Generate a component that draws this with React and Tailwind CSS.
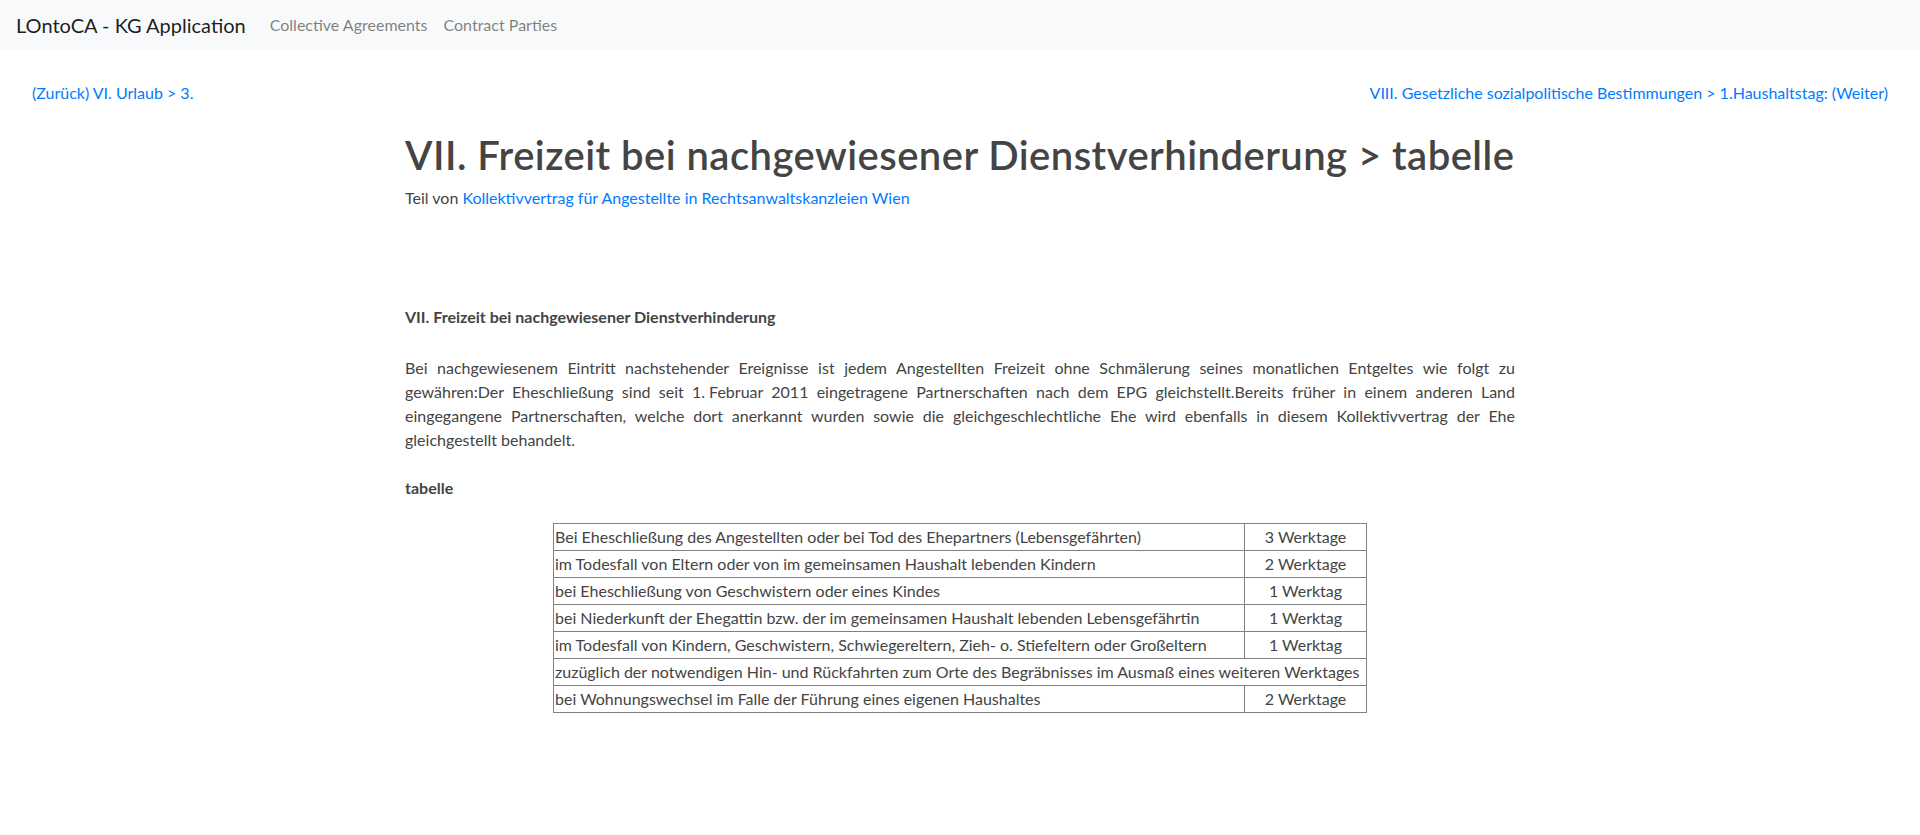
import React from "react";

const rows = [
  ["Bei Eheschließung des Angestellten oder bei Tod des Ehepartners (Lebensgefährten)", "3 Werktage"],
  ["im Todesfall von Eltern oder von im gemeinsamen Haushalt lebenden Kindern", "2 Werktage"],
  ["bei Eheschließung von Geschwistern oder eines Kindes", "1 Werktag"],
  ["bei Niederkunft der Ehegattin bzw. der im gemeinsamen Haushalt lebenden Lebensgefährtin", "1 Werktag"],
  ["im Todesfall von Kindern, Geschwistern, Schwiegereltern, Zieh- o. Stiefeltern oder Großeltern", "1 Werktag"],
  ["zuzüglich der notwendigen Hin- und Rückfahrten zum Orte des Begräbnisses im Ausmaß eines weiteren Werktages", null],
  ["bei Wohnungswechsel im Falle der Führung eines eigenen Haushaltes", "2 Werktage"],
];

const Navbar = () => (
  <nav className="flex h-[50px] items-center bg-[#f8f9fa] px-4">
    <a href="#" className="mr-4 text-[20px] leading-[30px] text-black/90">
      LOntoCA - KG Application
    </a>
    <a href="#" className="px-2 text-base leading-6 text-black/50">
      Collective Agreements
    </a>
    <a href="#" className="px-2 text-base leading-6 text-black/50">
      Contract Parties
    </a>
  </nav>
);

export default function App() {
  return (
    <div className="min-h-screen bg-white font-['Lato','Liberation_Sans',sans-serif] text-base leading-6 text-[#444]">
      <Navbar />

      <div className="flex justify-between px-8 pt-[31px]">
        <a href="#" className="text-[#007bff]">
          (Zurück) VI. Urlaub &gt; 3.
        </a>
        <a href="#" className="text-[#007bff]">
          VIII. Gesetzliche sozialpolitische Bestimmungen &gt; 1.Haushaltstag: (Weiter)
        </a>
      </div>

      <div className="mx-auto w-[1140px] px-[15px] pt-[26px]">
        <h1 className="mb-[7px] whitespace-nowrap text-[40px] font-semibold leading-[48px] tracking-[0.45px] text-[#444]">
          VII. Freizeit bei nachgewiesener Dienstverhinderung &gt; tabelle
        </h1>
        <p>
          Teil von{" "}
          <a href="#" className="text-[#007bff]">
            Kollektivvertrag für Angestellte in Rechtsanwaltskanzleien Wien
          </a>
        </p>

        <div className="pt-[95px]">
          <p className="font-bold">VII. Freizeit bei nachgewiesener Dienstverhinderung</p>
          <p className="mt-[27px] text-justify">
            Bei nachgewiesenem Eintritt nachstehender Ereignisse ist jedem Angestellten Freizeit
            ohne Schmälerung seines monatlichen Entgeltes wie folgt zu gewähren:Der Eheschließung
            sind seit 1.&#8239;Februar 2011 eingetragene Partnerschaften nach dem EPG
            gleichstellt.Bereits früher in einem anderen Land eingegangene Partnerschaften, welche
            dort anerkannt wurden sowie die gleichgeschlechtliche Ehe wird ebenfalls in diesem
            Kollektivvertrag der Ehe gleichgestellt behandelt.
          </p>
          <p className="mt-6 font-bold">tabelle</p>

          <table className="mx-auto mt-[23px] w-[814px] border-collapse">
            <tbody>
              {rows.map(([label, value], i) => (
                <tr key={i}>
                  {value ? (
                    <>
                      <td className="border border-[#808080] px-px py-px leading-6 whitespace-nowrap">
                        {label}
                      </td>
                      <td className="w-[122px] border border-[#808080] px-px py-px text-center leading-6">
                        {value}
                      </td>
                    </>
                  ) : (
                    <td colSpan={2} className="border border-[#808080] px-px py-px leading-6 whitespace-nowrap">
                      {label}
                    </td>
                  )}
                </tr>
              ))}
            </tbody>
          </table>
        </div>
      </div>
    </div>
  );
}
